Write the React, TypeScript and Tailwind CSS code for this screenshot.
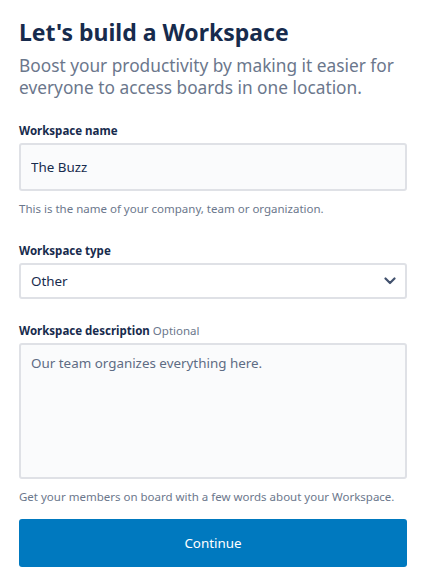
import React, { useState } from "react";

const Label = ({ text, extra }: { text: string; extra?: string }) => (
  <label className="block text-[11.5px] leading-[16px] font-bold text-[#172b4d] mb-[4px]">
    {text}
    {extra && <span className="font-normal text-[#6b778c]"> {extra}</span>}
  </label>
);

const Help = ({ children }: { children: React.ReactNode }) => (
  <p className="mt-[10px] text-[11.5px] leading-[16px] text-[#6b778c]">{children}</p>
);

export default function App() {
  const [name, setName] = useState("The Buzz");
  const [type, setType] = useState("Other");
  const [desc, setDesc] = useState("");

  return (
    <div
      className="min-h-[583px] bg-white pl-[19px] pr-[16px] pt-[16px] text-[#172b4d]"
      style={{ fontFamily: '"Noto Sans", "Open Sans", sans-serif' }}
    >
      <h1 className="text-[23px] leading-[32px] font-bold text-[#172b4d]">Let's build a Workspace</h1>
      <p className="mt-[7px] text-[17.3px] leading-[22px] text-[#6b778c]">
        Boost your productivity by making it easier for everyone to access boards in one location.
      </p>

      <form className="mt-[24px]" onSubmit={(e) => e.preventDefault()}>
        <Label text="Workspace name" />
        <input
          value={name}
          onChange={(e) => setName(e.target.value)}
          className="block h-[48px] w-full rounded-[3px] border-2 border-[#dfe1e6] bg-[#fafbfc] px-[10px] text-[13.4px] text-[#172b4d] outline-none"
        />
        <Help>This is the name of your company, team or organization.</Help>

        <div className="mt-[26px]">
          <Label text="Workspace type" />
          <div className="relative">
            <select
              value={type}
              onChange={(e) => setType(e.target.value)}
              className="block h-[36px] w-full appearance-none rounded-[3px] border-2 border-[#dfe1e6] bg-white px-[10px] text-[13.4px] text-[#172b4d] outline-none"
            >
              <option>Other</option>
              <option>Marketing</option>
              <option>Engineering-IT</option>
            </select>
            <svg
              className="pointer-events-none absolute right-[11px] top-[14px]"
              width="12"
              height="8"
              viewBox="0 0 12 8"
              fill="none"
            >
              <path d="M1.5 1.5 6 6l4.5-4.5" stroke="#42526e" strokeWidth="2.2" strokeLinecap="round" strokeLinejoin="round" />
            </svg>
          </div>
        </div>

        <div className="mt-[24px]">
          <Label text="Workspace description" extra="Optional" />
          <textarea
            value={desc}
            onChange={(e) => setDesc(e.target.value)}
            placeholder="Our team organizes everything here."
            className="block h-[136px] w-full resize-none rounded-[3px] border-2 border-[#dfe1e6] bg-[#fafbfc] px-[10px] py-[8px] text-[13.4px] leading-[20px] text-[#172b4d] outline-none placeholder:text-[#5e6c84]"
          />
          <Help>Get your members on board with a few words about your Workspace.</Help>
        </div>

        <button
          type="submit"
          className="mt-[14px] block h-[48px] w-full rounded-[3px] bg-[#0079bf] text-[13.4px] text-white"
        >
          Continue
        </button>
      </form>
    </div>
  );
}
